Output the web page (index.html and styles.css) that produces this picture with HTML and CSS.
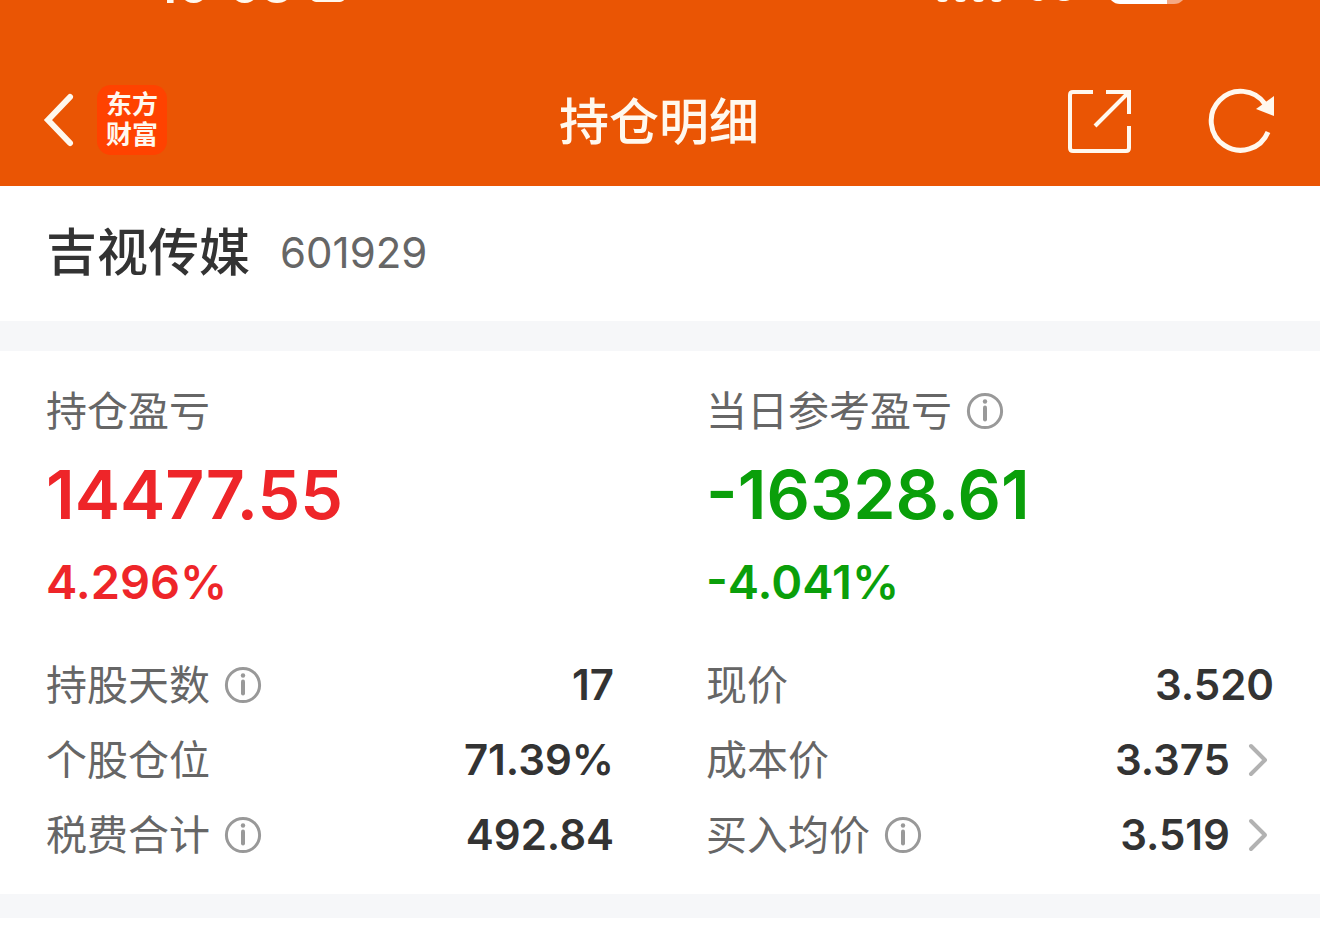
FILE: index.html
```html
<!DOCTYPE html>
<html lang="zh-CN">
<head>
    <meta charset="UTF-8">
    <meta name="viewport" content="width=device-width, initial-scale=1.0">
    <title>持仓明细</title>
    <link rel="stylesheet" href="styles.css">
</head>
<body>

    <!-- 状态栏 -->
    <div class="status-bar">
        <div class="status-time"><span>10</span><span>08</span><i class="status-tag"></i></div>
        <div class="status-right">
            <div class="signal"><i></i><i></i><i></i><i></i></div>
            <span class="network">5G</span>
            <div class="battery"></div>
        </div>
    </div>

    <!-- 顶部导航 -->
    <header class="nav">
        <div class="nav-left">
            <button type="button" class="icon-btn" aria-label="返回">
                <svg width="34" height="56" viewBox="0 0 34 56" fill="none" stroke="#fff8ee" stroke-width="6" stroke-linecap="round">
                    <path d="M28 5L6 28L28 51"/>
                </svg>
            </button>
            <a href="#" class="logo"><span>东方</span><span>财富</span></a>
        </div>
        <h1>持仓明细</h1>
        <div class="nav-right">
            <button type="button" class="icon-btn" aria-label="分享">
                <svg width="66" height="66" viewBox="0 0 66 66" fill="none" stroke="#fff8ee" stroke-width="4">
                    <path d="M26 5H6Q3 5 3 8V61Q3 64 6 64H59Q62 64 62 61V39"/>
                    <path d="M39 5H62V27"/>
                    <path d="M61 6L28 39"/>
                </svg>
            </button>
            <button type="button" class="icon-btn" aria-label="刷新">
                <svg width="68" height="68" viewBox="0 0 68 68" fill="none">
                    <path d="M60 46A29.5 29.5 0 1 1 57 18" stroke="#fff8ee" stroke-width="5"/>
                    <path d="M66 10V30L48 23Z" fill="#fff8ee"/>
                </svg>
            </button>
        </div>
    </header>

    <!-- 股票名称 -->
    <section class="stock">
        <h2>吉视传媒</h2>
        <span class="code">601929</span>
    </section>

    <!-- 盈亏与持仓数据 -->
    <main class="detail">
        <section class="column">
            <h3 class="label">持仓盈亏</h3>
            <p class="amount up">14477.55</p>
            <p class="percent up">4.296%</p>
            <dl>
                <div class="row">
                    <dt class="label">持股天数
                        <button type="button" class="icon-btn" aria-label="持股天数说明">
                            <svg class="info" viewBox="0 0 38 38"><circle cx="19" cy="19" r="16.6"/><path d="M19 15.5V27.5"/><circle class="dot" cx="19" cy="9.5" r="2.2"/></svg>
                        </button>
                    </dt>
                    <dd>17</dd>
                </div>
                <div class="row">
                    <dt class="label">个股仓位</dt>
                    <dd>71.39%</dd>
                </div>
                <div class="row">
                    <dt class="label">税费合计
                        <button type="button" class="icon-btn" aria-label="税费合计说明">
                            <svg class="info" viewBox="0 0 38 38"><circle cx="19" cy="19" r="16.6"/><path d="M19 15.5V27.5"/><circle class="dot" cx="19" cy="9.5" r="2.2"/></svg>
                        </button>
                    </dt>
                    <dd>492.84</dd>
                </div>
            </dl>
        </section>

        <section class="column">
            <h3 class="label">当日参考盈亏
                <button type="button" class="icon-btn" aria-label="当日参考盈亏说明">
                    <svg class="info" viewBox="0 0 38 38"><circle cx="19" cy="19" r="16.6"/><path d="M19 15.5V27.5"/><circle class="dot" cx="19" cy="9.5" r="2.2"/></svg>
                </button>
            </h3>
            <p class="amount down">-16328.61</p>
            <p class="percent down">-4.041%</p>
            <dl>
                <div class="row">
                    <dt class="label">现价</dt>
                    <dd>3.520</dd>
                </div>
                <div class="row">
                    <dt class="label">成本价</dt>
                    <dd>3.375
                        <button type="button" class="icon-btn" aria-label="查看成本价">
                            <svg class="arrow" viewBox="0 0 28 34"><path d="M5 3L19 17L5 31"/></svg>
                        </button>
                    </dd>
                </div>
                <div class="row">
                    <dt class="label">买入均价
                        <button type="button" class="icon-btn" aria-label="买入均价说明">
                            <svg class="info" viewBox="0 0 38 38"><circle cx="19" cy="19" r="16.6"/><path d="M19 15.5V27.5"/><circle class="dot" cx="19" cy="9.5" r="2.2"/></svg>
                        </button>
                    </dt>
                    <dd>3.519
                        <button type="button" class="icon-btn" aria-label="查看买入均价">
                            <svg class="arrow" viewBox="0 0 28 34"><path d="M5 3L19 17L5 31"/></svg>
                        </button>
                    </dd>
                </div>
            </dl>
        </section>
    </main>

</body>
</html>
```
FILE: styles.css
```css
* {
    box-sizing: border-box;
}

body {
    margin: 0;
    font-family: Inter, "Noto Sans CJK SC", sans-serif;
    background-color: #fff;
    color: #333;
}

h1, h2, h3, p, dl, dd {
    margin: 0;
}

.icon-btn {
    display: flex;
    padding: 0;
    border: none;
    background: none;
    cursor: pointer;
}

/* 状态栏 */
.status-bar {
    display: flex;
    justify-content: space-between;
    align-items: flex-end;
    height: 16px;
    padding: 0 134px 12px 156px;
    overflow: hidden;
    background-color: #ea5504;
    color: #fff8ee;
}

.status-time {
    display: flex;
    align-items: flex-end;
    gap: 18px;
    font-size: 50px;
    font-weight: 600;
    line-height: 38px;
}

.status-tag {
    width: 34px;
    height: 30px;
    margin-bottom: 2px;
    border-radius: 5px;
    background-color: #fff8ee;
}

.status-right {
    display: flex;
    align-items: flex-end;
}

.signal {
    display: flex;
    gap: 7px;
    margin-bottom: 2px;
}

.signal i {
    width: 11px;
    height: 20px;
    border-radius: 4px;
    background-color: #fff8ee;
}

.network {
    margin: 0 30px 0 24px;
    font-size: 38px;
    font-weight: 600;
    line-height: 34px;
}

.battery {
    width: 78px;
    height: 38px;
    border-radius: 12px;
    background: linear-gradient(to right, #fff 76%, #f5a983 76%);
}

/* 顶部导航 */
.nav {
    display: grid;
    grid-template-columns: 1fr auto 1fr;
    align-items: center;
    height: 170px;
    padding: 38px 44px 0 42px;
    background-color: #ea5504;
    color: #fff8ee;
}

.nav-left {
    display: flex;
    align-items: center;
    gap: 21px;
}

.logo {
    display: flex;
    flex-direction: column;
    align-items: center;
    justify-content: center;
    width: 70px;
    height: 70px;
    border-radius: 14px;
    background-color: #ff4200;
    color: #fff8ee;
    font-size: 26px;
    font-weight: 700;
    line-height: 30px;
    text-decoration: none;
}

.nav h1 {
    padding-top: 4px;
    font-size: 50px;
    font-weight: 500;
    line-height: 60px;
}

.nav-right {
    display: flex;
    justify-content: flex-end;
    align-items: center;
    gap: 75px;
}

/* 股票名称 */
.stock {
    display: flex;
    align-items: center;
    gap: 30px;
    height: 135px;
    padding: 0 46px 2px;
}

.stock h2 {
    font-size: 51px;
    font-weight: 500;
    line-height: 60px;
}

.code {
    color: #666;
    font-size: 42px;
}

/* 盈亏与持仓数据 */
.detail {
    display: grid;
    grid-template-columns: 1fr 1fr;
    column-gap: 92px;
    padding: 30px 46px 22px;
    border-top: 30px solid #f6f7f9;
    border-bottom: 24px solid #f6f7f9;
}

.label {
    display: flex;
    align-items: center;
    gap: 14px;
    color: #666;
    font-size: 41px;
    font-weight: 400;
    line-height: 60px;
}

.amount {
    font-size: 68px;
    font-weight: 600;
    line-height: 106px;
}

.percent {
    margin-bottom: 30px;
    font-size: 47px;
    font-weight: 600;
    line-height: 70px;
}

.up {
    color: #ee2529;
}

.down {
    color: #0a9f0a;
}

.row {
    display: flex;
    justify-content: space-between;
    align-items: center;
    height: 75px;
}

.row dd {
    display: flex;
    align-items: center;
    gap: 16px;
    font-size: 42px;
    font-weight: 600;
}

.info {
    width: 38px;
    height: 38px;
    fill: none;
    stroke: #999;
    stroke-width: 3;
    stroke-linecap: round;
}

.info path {
    stroke-width: 4;
}

.info .dot {
    fill: #999;
    stroke: none;
}

.arrow {
    width: 28px;
    height: 34px;
    fill: none;
    stroke: #b2b2b2;
    stroke-width: 4;
    stroke-linecap: round;
    stroke-linejoin: round;
}
```
